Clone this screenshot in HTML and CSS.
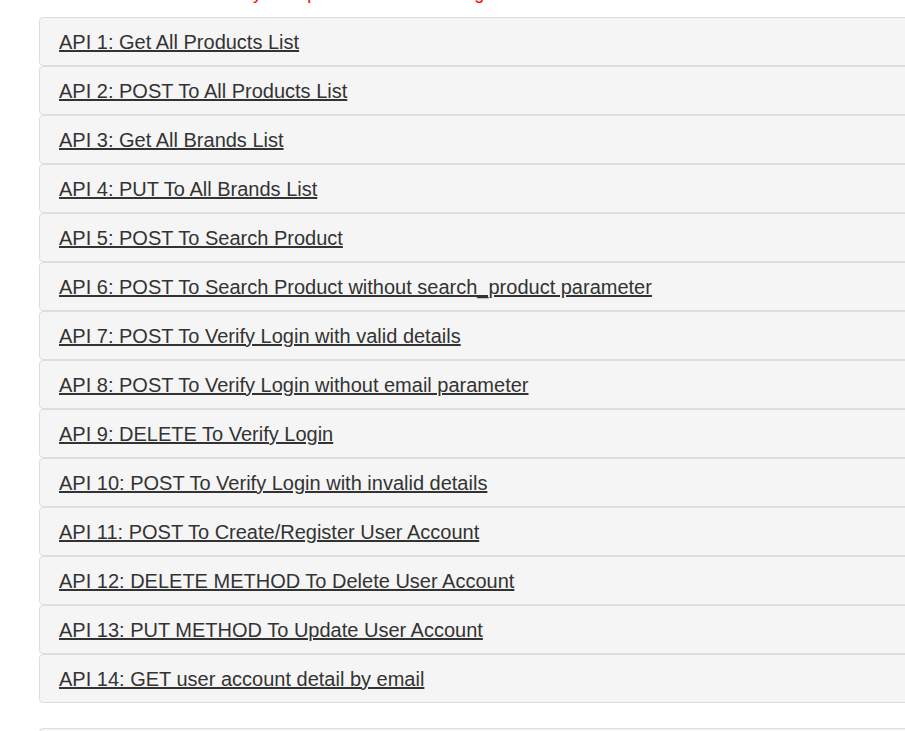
FILE: index.html
```html
<!DOCTYPE html>
<html>
<head>
<meta charset="utf-8">
<link rel="stylesheet" href="styles.css">
</head>
<body>
<p class="notice">Below is the list of all APIs for you to practice all API testing</p>
<div class="api-list">
  <div class="panel"><a href="#">API 1: Get All Products List</a></div>
  <div class="panel"><a href="#">API 2: POST To All Products List</a></div>
  <div class="panel"><a href="#">API 3: Get All Brands List</a></div>
  <div class="panel"><a href="#">API 4: PUT To All Brands List</a></div>
  <div class="panel"><a href="#">API 5: POST To Search Product</a></div>
  <div class="panel"><a href="#">API 6: POST To Search Product without search_product parameter</a></div>
  <div class="panel"><a href="#">API 7: POST To Verify Login with valid details</a></div>
  <div class="panel"><a href="#">API 8: POST To Verify Login without email parameter</a></div>
  <div class="panel"><a href="#">API 9: DELETE To Verify Login</a></div>
  <div class="panel"><a href="#">API 10: POST To Verify Login with invalid details</a></div>
  <div class="panel"><a href="#">API 11: POST To Create/Register User Account</a></div>
  <div class="panel"><a href="#">API 12: DELETE METHOD To Delete User Account</a></div>
  <div class="panel"><a href="#">API 13: PUT METHOD To Update User Account</a></div>
  <div class="panel"><a href="#">API 14: GET user account detail by email</a></div>
</div>
<div class="api-list next">
  <div class="panel empty"></div>
</div>
</body>
</html>
```
FILE: styles.css
```css
html, body {
  margin: 0;
  padding: 0;
  overflow: hidden;
  background: #fff;
  font-family: "Liberation Sans", Arial, sans-serif;
}
.notice {
  color: #ff0000;
  font-size: 18px;
  line-height: 20px;
  margin: -17px 0 14px 0;
  padding-left: 13px;
  white-space: nowrap;
}
.api-list {
  margin-left: 39px;
  width: 1100px;
}
.api-list.next {
  margin-top: 25px;
}
.panel {
  border: 1px solid #dddddd;
  background: #f5f5f5;
  border-radius: 4px;
  padding: 13px 19px 11px;
  font-size: 20px;
  line-height: 23px;
}
.panel.empty {
  height: 23px;
}
.panel a {
  color: #333333;
  text-decoration: underline;
}
```
